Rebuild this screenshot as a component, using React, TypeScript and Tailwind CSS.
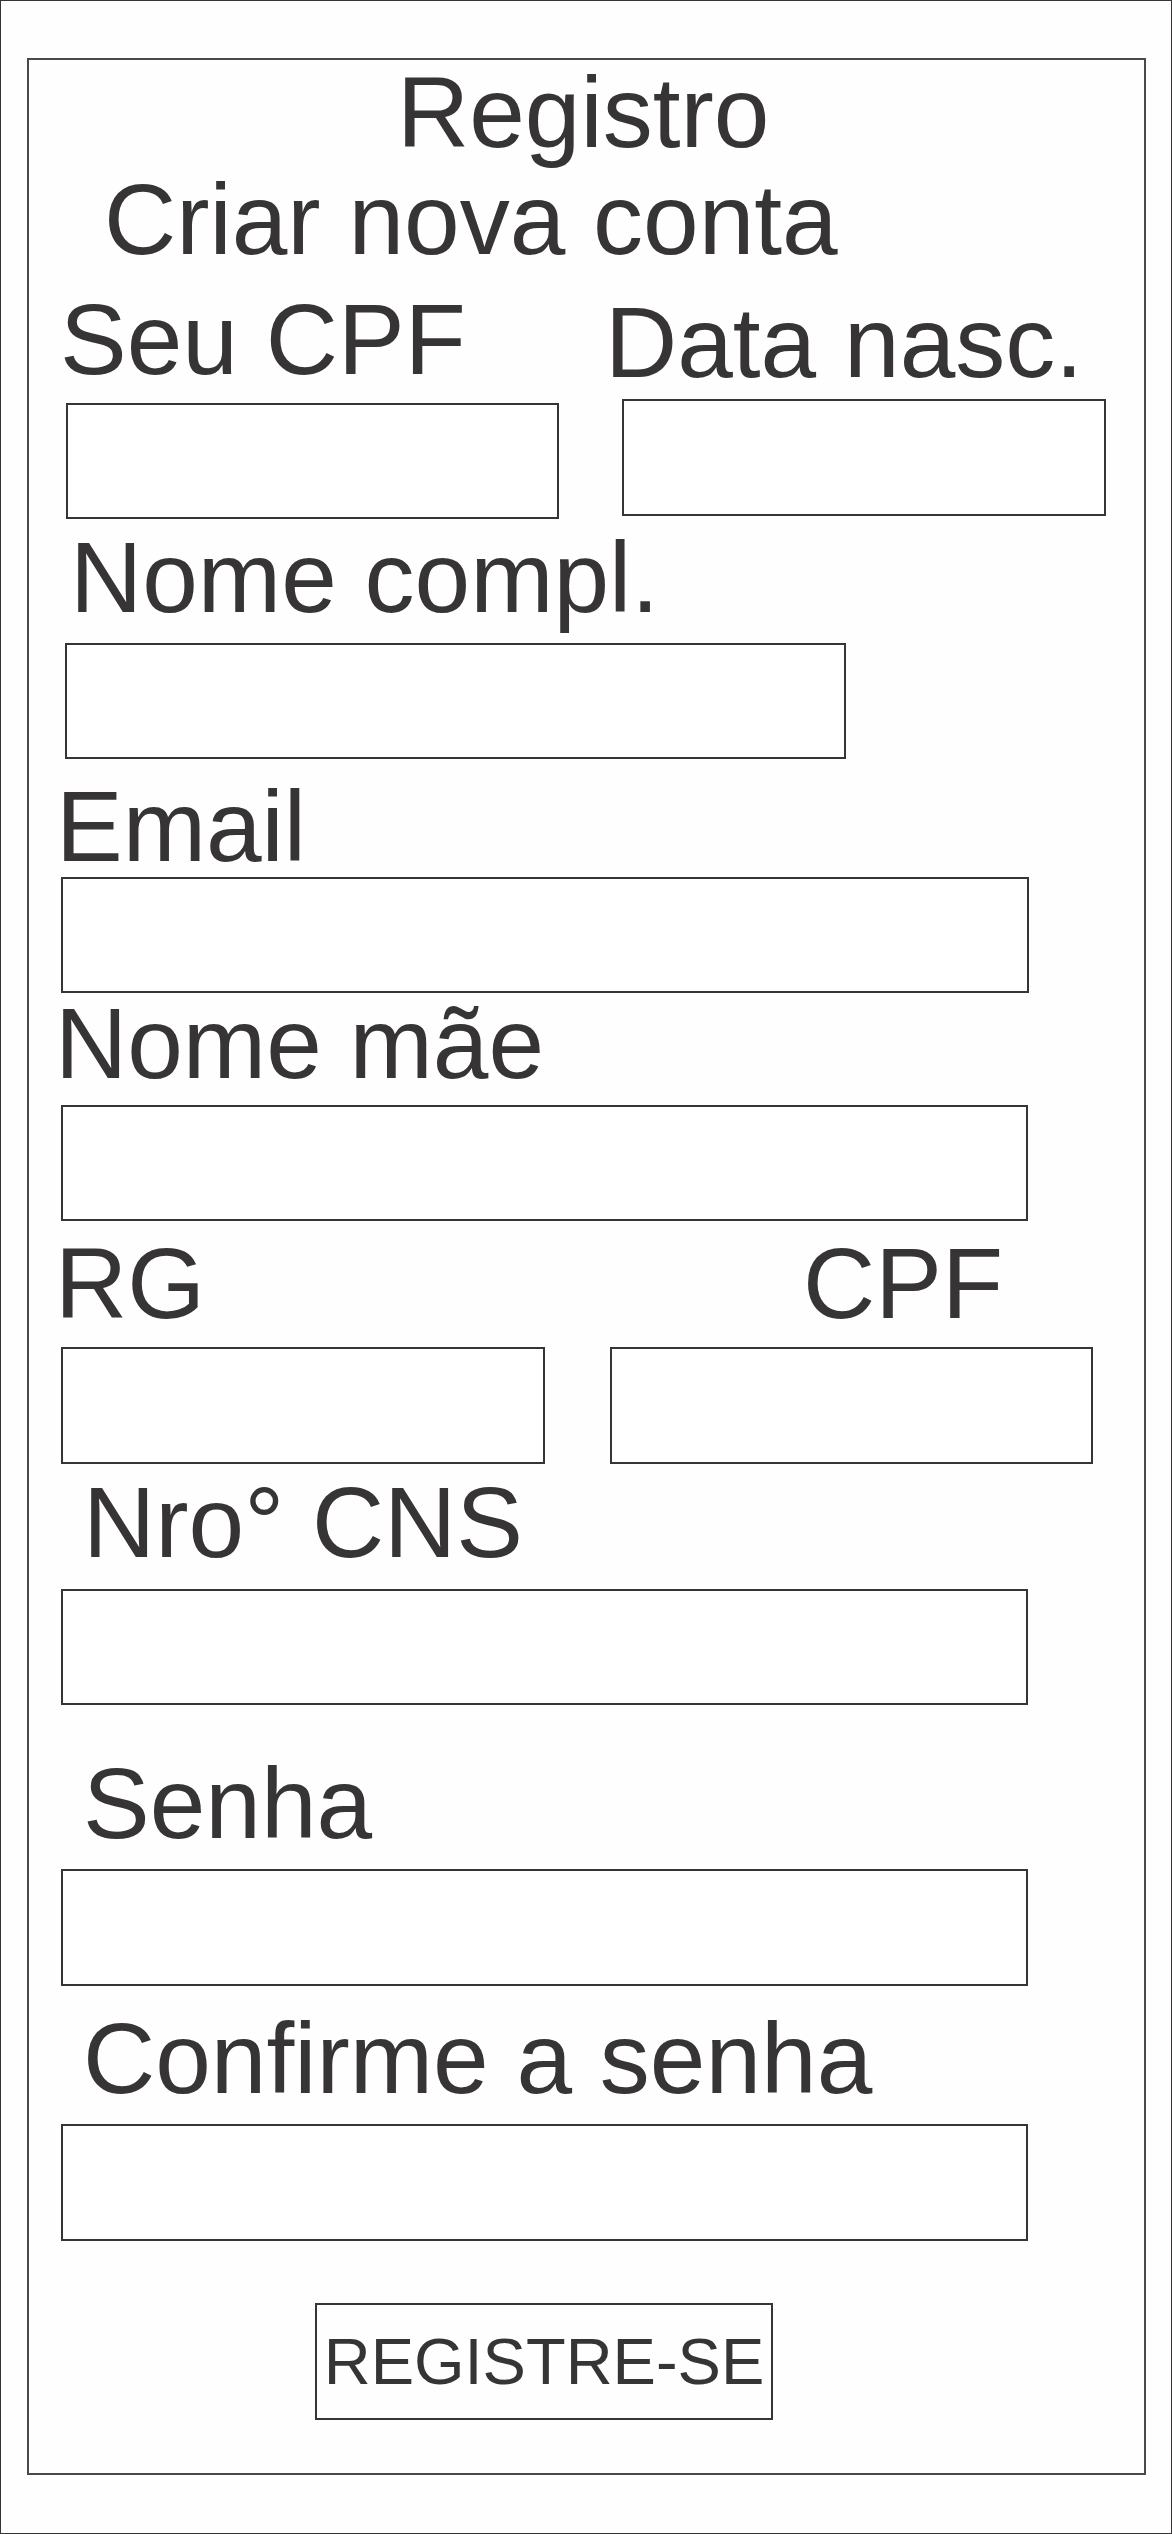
import React from "react";

const font = { fontFamily: '"Liberation Sans", Arial, sans-serif' };

function Label({ children, className = "" }: { children: React.ReactNode; className?: string }) {
  return (
    <div className={`text-[100px] leading-[100px] text-[#373435] whitespace-nowrap ${className}`}>
      {children}
    </div>
  );
}

function Box({ className = "" }: { className?: string }) {
  return <div className={`border-2 border-[#373435] bg-white ${className}`} />;
}

export default function App() {
  return (
    <div
      style={font}
      className="w-[1172px] h-[2534px] border border-[#373435] bg-[#fefefe] pt-[57px] pl-[26px]"
    >
      <div className="w-[1119px] h-[2417px] border-2 border-[#4a4a4a] flex flex-col">
        <Label className="mt-[2px] pl-[368px]">Registro</Label>
        <Label className="mt-[7px] pl-[75px]">Criar nova conta</Label>

        <div className="mt-[20px] flex items-start">
          <div className="w-[530px] flex flex-col">
            <Label className="pl-[31px]">Seu CPF</Label>
            <Box className="mt-[14px] ml-[37px] w-[493px] h-[116px]" />
          </div>
          <div className="ml-[42px] flex flex-col">
            <Label className="mt-[3px] pl-[4px]">Data nasc.</Label>
            <Box className="mt-[7px] ml-[21px] w-[484px] h-[117px]" />
          </div>
        </div>

        <Label className="mt-[8px] pl-[41px]">Nome compl.</Label>
        <Box className="mt-[16px] ml-[36px] w-[781px] h-[116px]" />

        <Label className="mt-[17px] pl-[27px]">Email</Label>
        <Box className="mt-[1px] ml-[32px] w-[968px] h-[116px]" />

        <Label className="mt-0 pl-[26px]">Nome mãe</Label>
        <Box className="mt-[12px] ml-[32px] w-[967px] h-[116px]" />

        <div className="mt-[12px] flex items-start">
          <div className="w-[516px] flex flex-col">
            <Label className="pl-[26px]">RG</Label>
            <Box className="mt-[14px] ml-[32px] w-[484px] h-[117px]" />
          </div>
          <div className="flex flex-col">
            <Label className="pl-[258px]">CPF</Label>
            <Box className="mt-[14px] ml-[65px] w-[483px] h-[117px]" />
          </div>
        </div>

        <Label className="mt-[8px] pl-[54px]">Nro° CNS</Label>
        <Box className="mt-[17px] ml-[32px] w-[967px] h-[116px]" />

        <Label className="mt-[48px] pl-[54px]">Senha</Label>
        <Box className="mt-[16px] ml-[32px] w-[967px] h-[117px]" />

        <Label className="mt-[22px] pl-[54px]">Confirme a senha</Label>
        <Box className="mt-[16px] ml-[32px] w-[967px] h-[117px]" />

        <div className="mt-[62px] ml-[286px] w-[458px] h-[117px] border-2 border-[#373435] flex items-center justify-center">
          <span className="text-[65px] leading-[65px] text-[#373435] whitespace-nowrap">REGISTRE-SE</span>
        </div>
      </div>
    </div>
  );
}
